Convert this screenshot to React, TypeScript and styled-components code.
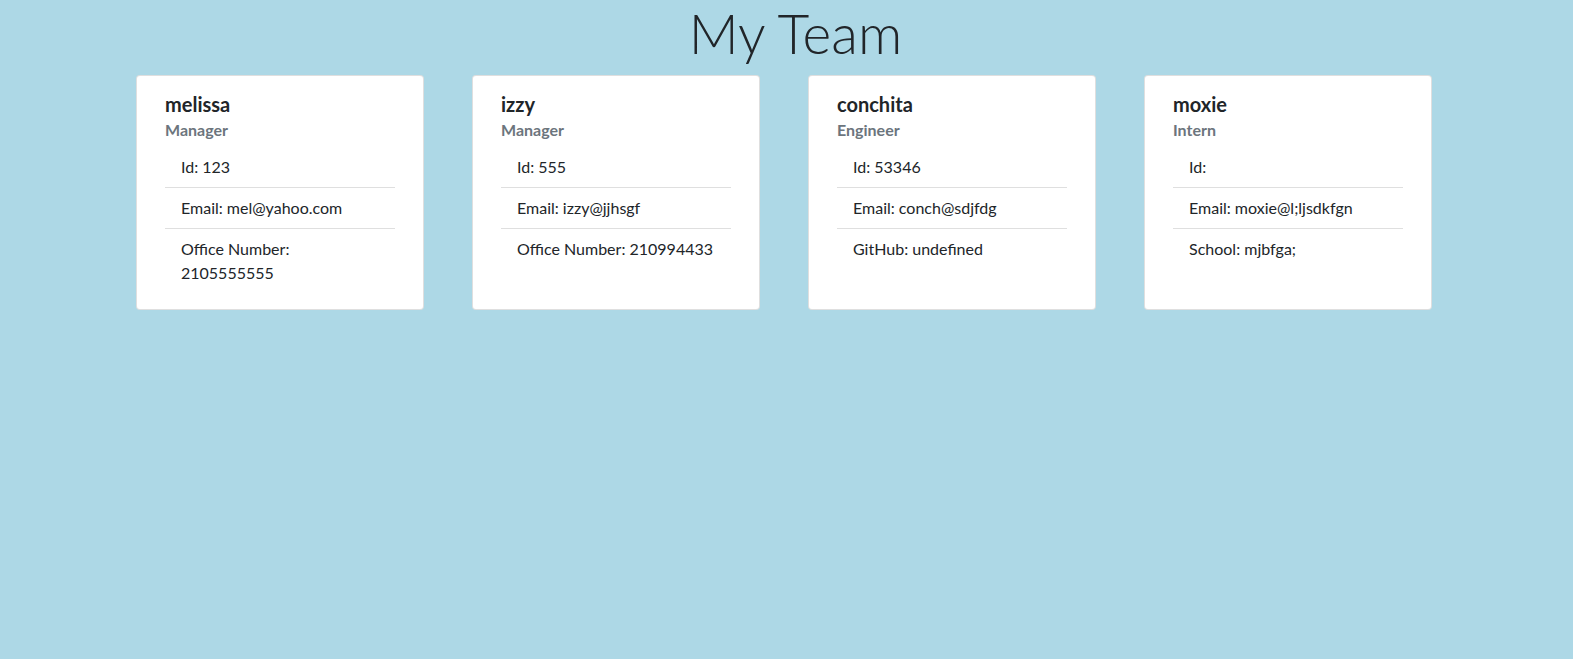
import React from 'react';
import styled, {createGlobalStyle} from 'styled-components';

const GlobalStyle = createGlobalStyle`
    * {
        box-sizing: border-box;
    }
    body {
        margin: 0;
        background-color: #add8e6;
        color: #212529;
        font-family: Lato, "Noto Sans", sans-serif;
        font-size: 16px;
        line-height: 1.5;
    }
`;

interface Member {
    name: string;
    role: string;
    id: string;
    email: string;
    extraLabel: string;
    extraValue: string;
}

const team: Member[] = [
    {name: 'melissa', role: 'Manager', id: '123', email: 'mel@yahoo.com', extraLabel: 'Office Number', extraValue: '2105555555'},
    {name: 'izzy', role: 'Manager', id: '555', email: 'izzy@jjhsgf', extraLabel: 'Office Number', extraValue: '210994433'},
    {name: 'conchita', role: 'Engineer', id: '53346', email: 'conch@sdjfdg', extraLabel: 'GitHub', extraValue: 'undefined'},
    {name: 'moxie', role: 'Intern', id: '', email: 'moxie@l;ljsdkfgn', extraLabel: 'School', extraValue: 'mjbfga;'}
];

const Page = styled.div`
    display: flex;
    flex-direction: column;
    align-items: center;
`;

const Title = styled.h1`
    margin: 0 0 8px 18px;
    font-size: 55px;
    font-weight: 300;
    line-height: 67px;
    text-align: center;
`;

const CardRow = styled.div`
    display: flex;
    justify-content: center;
    gap: 48px;
    padding-right: 5px;
`;

const Card = styled.div`
    width: 288px;
    background-color: #fff;
    border: 1px solid rgba(0, 0, 0, 0.125);
    border-radius: 4px;
    padding: 16px 28px;
    display: flex;
    flex-direction: column;
`;

const Name = styled.h5`
    margin: 0 0 8px;
    font-size: 20px;
    font-weight: 700;
    line-height: 1.2;
`;

const Role = styled.h6`
    margin: -4px 0 0;
    font-size: 16px;
    font-weight: 700;
    line-height: 1.2;
    color: #6c757d;
`;

const InfoList = styled.ul`
    list-style: none;
    margin: 8px 0 0;
    padding: 0;
`;

const InfoItem = styled.li`
    padding: 8px 16px;
    border-bottom: 1px solid rgba(0, 0, 0, 0.125);

    &:last-child {
        border-bottom: 0;
    }
`;

function MemberCard({member}: {member: Member}) {
    return (
        <Card>
            <Name>{member.name}</Name>
            <Role>{member.role}</Role>
            <InfoList>
                <InfoItem>Id: {member.id}</InfoItem>
                <InfoItem>Email: {member.email}</InfoItem>
                <InfoItem>
                    {member.extraLabel}: {member.extraValue}
                </InfoItem>
            </InfoList>
        </Card>
    );
}

export default function App() {
    return (
        <Page>
            <GlobalStyle />
            <Title>My Team</Title>
            <CardRow>
                {team.map((m) => (
                    <MemberCard key={m.name} member={m} />
                ))}
            </CardRow>
        </Page>
    );
}
